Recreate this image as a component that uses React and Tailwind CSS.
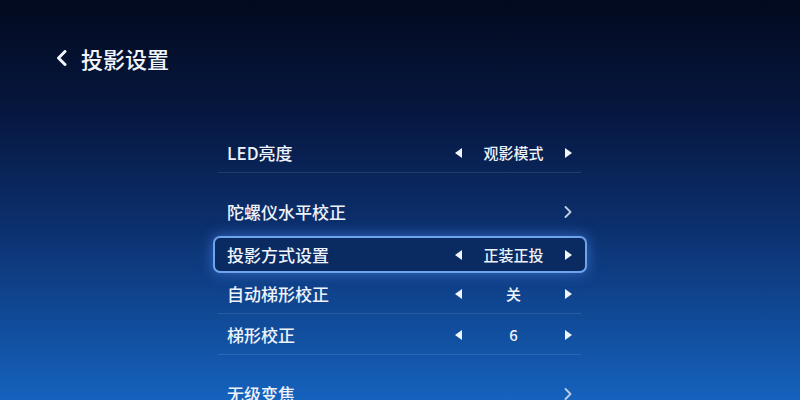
import React from 'react';

const font = { fontFamily: '"Noto Sans CJK SC", "Noto Sans", sans-serif' };

const LeftTri = () => (
  <svg width="7" height="10" viewBox="0 0 7 10" className="shrink-0">
    <path d="M7 0 L0 5 L7 10 Z" fill="#f2f5fb" />
  </svg>
);

const RightTri = () => (
  <svg width="7" height="10" viewBox="0 0 7 10" className="shrink-0">
    <path d="M0 0 L7 5 L0 10 Z" fill="#f2f5fb" />
  </svg>
);

const Chevron = () => (
  <svg width="8" height="12" viewBox="0 0 8 12" className="shrink-0">
    <path d="M1.5 1 L6.5 6 L1.5 11" fill="none" stroke="#c3cde0" strokeWidth="1.8" strokeLinecap="round" strokeLinejoin="round" />
  </svg>
);

const Row = ({ label, value, link, active, divider }) => {
  const inner = (
    <div className="flex items-center justify-between h-full pl-[13px] pr-[14px]">
      <span className="text-[17px] font-medium text-[#eef3fb] leading-none">{label}</span>
      {link ? (
        <Chevron />
      ) : (
        <div className="flex items-center">
          <LeftTri />
          <span className="w-[103px] text-center text-[15px] font-medium text-[#eef3fb] leading-none">{value}</span>
          <RightTri />
        </div>
      )}
    </div>
  );

  if (active) {
    return (
      <div className="h-[41px] pt-[4px]">
        <div className="h-[37px] rounded-[7px] border-2 border-[#6ea4ec] bg-[#0a2a62] shadow-[0_0_14px_rgba(90,150,255,0.55)] -mx-[1px]">
          <div className="h-full -ml-[1px] -mr-[1px]">{inner}</div>
        </div>
      </div>
    );
  }

  return (
    <div className="relative h-[41px]">
      {inner}
      {divider && <div className="absolute bottom-0 left-[4px] right-[5px] h-px bg-white/10" />}
    </div>
  );
};

export default function App() {
  return (
    <div
      className="w-[800px] h-[400px] overflow-hidden bg-[linear-gradient(180deg,#030a1f_0%,#06173f_28%,#0c3170_58%,#1562bd_100%)]"
      style={font}
    >
      {/* Header */}
      <div className="flex items-center h-[30px] mt-[43px] pl-[56px] gap-[14px]">
        <svg width="11" height="16" viewBox="0 0 11 16">
          <path d="M9 1.5 L2.5 8 L9 14.5" fill="none" stroke="#f2f5fb" strokeWidth="3" strokeLinecap="round" strokeLinejoin="round" />
        </svg>
        <span className="text-[22px] font-medium text-[#f2f5fb] leading-none">投影设置</span>
      </div>

      {/* List */}
      <div className="w-[372px] mx-auto mt-[59px]">
        <Row label="LED亮度" value="观影模式" divider />
        <div className="h-[18px]" />
        <Row label="陀螺仪水平校正" link />
        <Row label="投影方式设置" value="正装正投" active />
        <Row label="自动梯形校正" value="关" divider />
        <Row label="梯形校正" value="6" divider />
        <div className="h-[18px]" />
        <Row label="无级变焦" link />
      </div>
    </div>
  );
}
